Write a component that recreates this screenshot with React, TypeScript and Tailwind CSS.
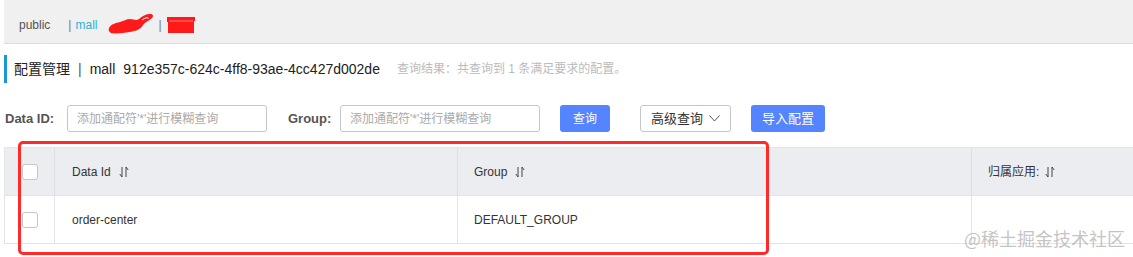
import React from 'react'

const font = { fontFamily: '"Liberation Sans", "Noto Sans CJK SC", sans-serif' }

function SortIcon() {
    return (
        <svg width="10" height="12" viewBox="0 0 10 12" className="inline-block">
            <path d="M3 1 V11 L0.8 8" fill="none" stroke="#444" strokeWidth="1" />
            <path d="M7 11 V1 L9.2 4" fill="none" stroke="#444" strokeWidth="1" />
        </svg>
    )
}

function Checkbox() {
    return <div className="w-4 h-4 bg-white border border-[#c4c6cf] rounded-[3px]" />
}

function App() {
    return (
        <div className="relative w-[1133px] h-[257px] overflow-hidden bg-white pl-1 text-[#333]" style={font}>
            {/* top breadcrumb bar */}
            <div className="h-[44px] bg-[#f0f0f0] border-b border-[#dcdcdc] flex items-center pl-[15px] text-[12px] pt-[6px]">
                <span className="text-[#555]">public</span>
                <span className="ml-[18px] text-[#777]">|</span>
                <span className="ml-[4px] text-[#2bb3d4]">mall</span>
                <svg width="46" height="22" viewBox="0 0 46 22" className="ml-[10px] -mt-[2px]">
                    <path d="M1 15 C3 11 8 10 12 9 C16 8 18 6 22 6 C26 6 28 8 31 6 C34 3 38 1 42 1 C45 1 46 3 44 5 C41 8 37 9 35 12 C33 16 28 18 22 19 C15 20 8 21 3 20 C1 19 0 17 1 15 Z" fill="#ff1a1a" />
                    <path d="M34 7 C38 4 41 4 40 6" fill="none" stroke="#fff" strokeWidth="1" />
                </svg>
                <span className="ml-[5px] text-[#777]">|</span>
                <svg width="30" height="18" viewBox="0 0 30 18" className="ml-[4px]">
                    <path d="M1 1 H29 V5 H28 V17 H2 V6 H1 Z" fill="#ff1a1a" />
                    <path d="M3 5 H27" stroke="#ff9090" strokeWidth="0.8" />
                </svg>
            </div>

            {/* title row */}
            <div className="mt-[11px] flex items-center h-[28px]">
                <div className="w-[3px] h-[28px] bg-[#1a98d5]" />
                <span className="ml-[7px] text-[14px] text-[#222]">配置管理</span>
                <span className="ml-[8px] text-[14px] text-[#555]">|</span>
                <span className="ml-[8px] text-[14px] text-[#222]">mall</span>
                <span className="ml-[8px] text-[14px] text-[#222]">912e357c-624c-4ff8-93ae-4cc427d002de</span>
                <span className="ml-[17px] text-[12px] text-[#bbb]">查询结果：共查询到 1 条满足要求的配置。</span>
            </div>

            {/* search row */}
            <div className="mt-[22px] flex items-center h-[27px] text-[12px]">
                <span className="ml-[1px] font-bold text-[13px] text-[#555] w-[62px]">Data ID:</span>
                <div className="w-[200px] h-[27px] border border-[#c4c6cf] rounded-[3px] flex items-center pl-[9px] text-[#aaa]">
                    添加通配符'*'进行模糊查询
                </div>
                <span className="ml-[21px] font-bold text-[13px] text-[#555] w-[52px]">Group:</span>
                <div className="w-[200px] h-[27px] border border-[#c4c6cf] rounded-[3px] flex items-center pl-[9px] text-[#aaa]">
                    添加通配符'*'进行模糊查询
                </div>
                <button className="ml-[20px] w-[50px] h-[27px] rounded-[3px] bg-[#5584ff] text-white text-[12px]">查询</button>
                <button className="ml-[30px] w-[91px] h-[27px] rounded-[3px] border border-[#c4c6cf] bg-white text-[#333] text-[13px] flex items-center justify-center gap-[6px]">
                    高级查询
                    <svg width="11" height="7" viewBox="0 0 11 7">
                        <polyline points="0.5,0.5 5.5,6 10.5,0.5" fill="none" stroke="#555" strokeWidth="1" />
                    </svg>
                </button>
                <button className="ml-[20px] w-[74px] h-[27px] rounded-[3px] bg-[#5584ff] text-white text-[13px]">导入配置</button>
            </div>

            {/* table */}
            <div className="mt-[15px] w-[1200px] border-l border-t border-b border-[#e3e4e8] text-[12px] text-[#333]">
                <div className="flex h-[48px] bg-[#ebedf0] border-b border-[#e3e4e8]">
                    <div className="w-[50px] flex items-center justify-center border-r border-[#dcdee3]">
                        <Checkbox />
                    </div>
                    <div className="w-[403px] flex items-center pl-[17px] gap-[8px] border-r border-[#dcdee3]">
                        Data Id <SortIcon />
                    </div>
                    <div className="w-[514px] flex items-center pl-[16px] gap-[8px] border-r border-[#dcdee3]">
                        Group <SortIcon />
                    </div>
                    <div className="flex-1 flex items-center pl-[16px] gap-[6px]">
                        归属应用: <SortIcon />
                    </div>
                </div>
                <div className="flex h-[47px] bg-white">
                    <div className="w-[50px] flex items-center justify-center border-r border-[#e3e4e8]">
                        <Checkbox />
                    </div>
                    <div className="w-[403px] flex items-center pl-[17px] border-r border-[#e3e4e8]">order-center</div>
                    <div className="w-[514px] flex items-center pl-[16px] border-r border-[#e3e4e8]">DEFAULT_GROUP</div>
                    <div className="flex-1" />
                </div>
            </div>

            {/* red annotation box */}
            <div className="absolute left-[18px] top-[141px] w-[751px] h-[114px] border-[3px] border-[#ff2b2b] rounded-[5px]" />

            {/* watermark */}
            <div
                className="absolute left-[964px] top-[229px] text-[18px] text-[#aaa]/70 leading-none"
                style={{ fontFamily: '"Noto Sans CJK SC", sans-serif' }}
            >
                @稀土掘金技术社区
            </div>
        </div>
    )
}

export default App
